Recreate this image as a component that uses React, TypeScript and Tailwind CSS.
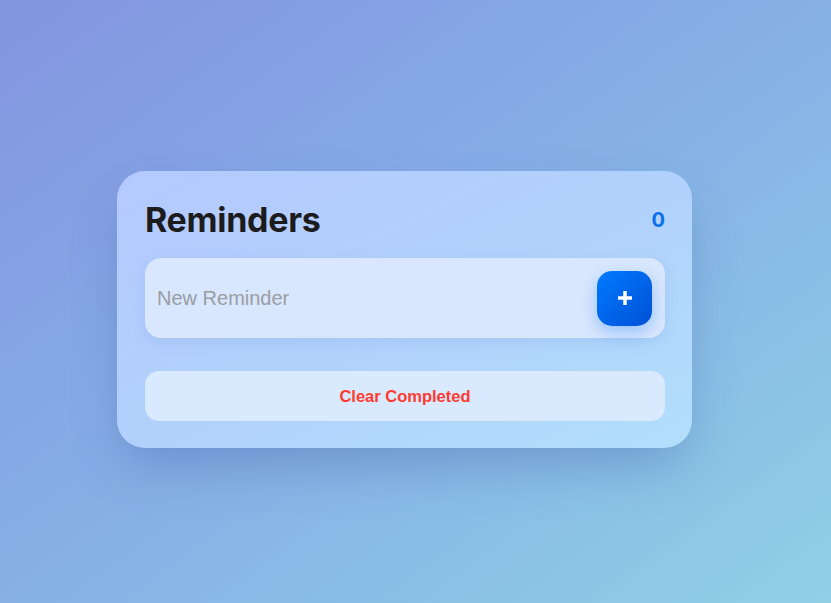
import React, { useState } from 'react';

const App: React.FC = () => {
  const [text, setText] = useState('');
  const count = 0;

  return (
    <div className="min-h-screen w-full flex items-center justify-center bg-gradient-to-br from-[#8394e0] via-[#86b0e6] to-[#8fd0e5] pt-[16px] pr-[22px]">
      {/* Card */}
      <div className="w-[575px] rounded-[28px] bg-gradient-to-br from-[#b5c9fd] via-[#b1d1fc] to-[#b2defb] pl-[28px] pr-[27px] pt-[28px] pb-[27px] shadow-[0_24px_50px_-8px_rgba(60,90,160,0.35)]">
        <div className="flex items-center justify-between h-[42px] mb-[17px]">
          <h1 className="font-['Inter',sans-serif] text-[34px] font-bold tracking-[-0.3px] text-[#1c1c1e] leading-none">
            Reminders
          </h1>
          <span className="font-['Inter',sans-serif] text-[20px] font-bold text-[#0a70eb] leading-none">
            {count}
          </span>
        </div>

        {/* Input row */}
        <div className="flex items-center h-[80px] rounded-[16px] bg-[#dae8fd]/95 pl-[12px] pr-[13px] shadow-[0_4px_14px_rgba(90,130,210,0.15)]">
          <input
            type="text"
            value={text}
            onChange={(e) => setText(e.target.value)}
            placeholder="New Reminder"
            className="flex-1 bg-transparent outline-none font-['Liberation_Sans',Arial,sans-serif] text-[20px] text-[#1c1c1e] placeholder:text-[#9a9da3]"
          />
          <button className="w-[55px] h-[55px] rounded-[15px] bg-gradient-to-br from-[#007aff] to-[#0050d6] flex items-center justify-center shadow-[0_6px_16px_rgba(0,110,255,0.3)]">
            <svg width="14" height="14" viewBox="0 0 14 14">
              <rect x="5.25" y="0" width="3.5" height="14" fill="white" />
              <rect x="0" y="5.25" width="14" height="3.5" fill="white" />
            </svg>
          </button>
        </div>

        {/* Clear */}
        <button className="mt-[33px] w-full h-[50px] rounded-[14px] bg-[#d9e9fe] flex items-center justify-center font-['Liberation_Sans',Arial,sans-serif] text-[16.5px] font-bold text-[#ff3b30]">
          Clear Completed
        </button>
      </div>
    </div>
  );
};

export default App;
